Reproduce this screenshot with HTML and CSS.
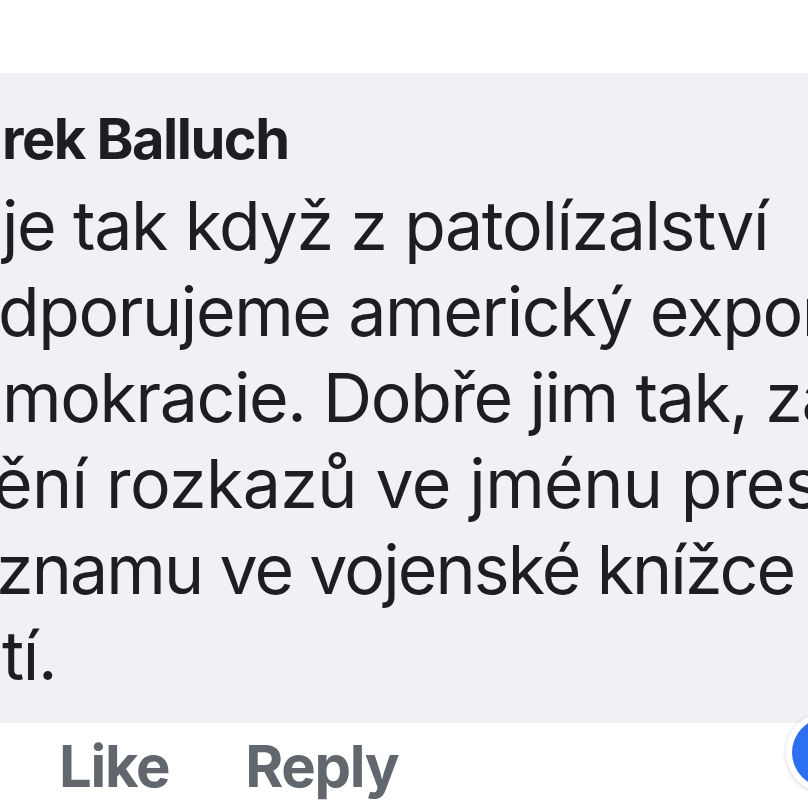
FILE: index.html
```html
<!DOCTYPE html>
<html lang="cs">
<head>
    <meta charset="UTF-8">
    <meta name="viewport" content="width=device-width, initial-scale=1.0">
    <title>Komentář</title>

    <link rel="stylesheet" href="styles.css">
</head>
<body>
    <div class="comment">
        <div class="bubble">
            <div class="author">rek Balluch</div>
            <div class="line l1">je tak když z patolízalství</div>
            <div class="line l2">dporujeme americký export</div>
            <div class="line l3">mokracie. Dobře jim tak, za</div>
            <div class="line l4">ění rozkazů ve jménu presidenta</div>
            <div class="line l5">znamu ve vojenské knížce</div>
            <div class="line l6">tí.</div>
        </div>
        <div class="actions">
            <span class="action">Like</span>
            <span class="action">Reply</span>
        </div>
        <div class="reaction"><span class="reaction-dot"></span></div>
    </div>
</body>
</html>
```

FILE: styles.css
```css
html, body{
    margin: 0;
    padding: 0;
    background-color: #ffffff;
    overflow: hidden;
}

body{
    width: 808px;
    height: 808px;
    font-family: Inter, "Noto Sans", sans-serif;
    color: #1c1e21;
}

.comment{
    position: relative;
    padding-top: 73px;
}

.bubble{
    background-color: #eff1f4;
    padding: 23px 0 25px 0;
    overflow: hidden;
}

.author{
    font-size: 56px;
    font-weight: 700;
    line-height: 86px;
    letter-spacing: -1.5px;
    white-space: nowrap;
    padding-left: 2px;
}

.line{
    font-size: 68px;
    line-height: 86px;
    letter-spacing: -1.4px;
    white-space: nowrap;
    padding-left: 2px;
}

.l2{ margin-left: -4px; }
.l4{ margin-left: -9px; letter-spacing: -0.6px; }
.l5{ margin-left: -6px; letter-spacing: -1.9px; }

.actions{
    display: flex;
    gap: 76px;
    padding: 8px 0 0 59px;
}

.action{
    font-size: 58px;
    font-weight: 700;
    line-height: 70px;
    letter-spacing: -1.3px;
    color: #62666d;
}

.reaction{
    position: absolute;
    left: 786px;
    top: 712px;
    width: 81px;
    height: 81px;
    border-radius: 50%;
    background-color: #ffffff;
    box-shadow: 0 1px 4px rgba(0, 0, 0, 0.18);
    display: flex;
    align-items: center;
    justify-content: center;
}

.reaction-dot{
    width: 69px;
    height: 69px;
    border-radius: 50%;
    background-color: #2c6ff1;
}
```
